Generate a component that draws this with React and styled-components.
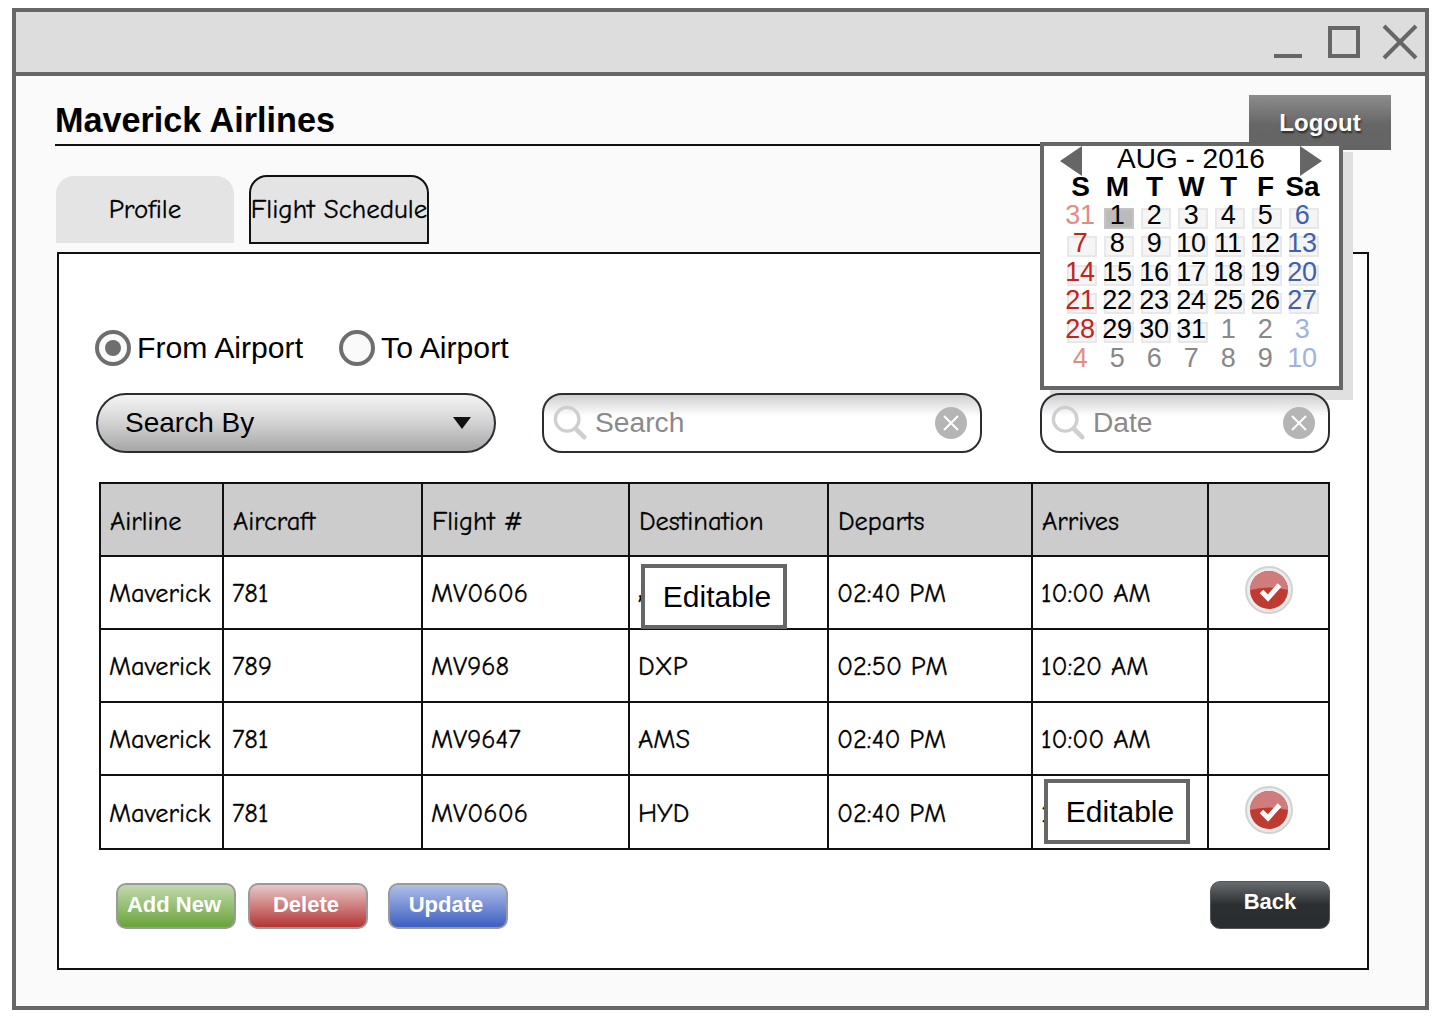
import styled, { createGlobalStyle } from "styled-components";

const sketch = `"Comic Sans MS", "Comic Neue", cursive`;

const GlobalStyle = createGlobalStyle`
  html, body {
    margin: 0;
    padding: 0;
    background: #fff;
  }
  * {
    box-sizing: border-box;
  }
`;

const Page = styled.div`
  padding: 8px 0 0 12px;
  font-family: "Liberation Sans", Arial, sans-serif;
  color: #000;
`;

const Window = styled.div`
  position: relative;
  width: 1417px;
  height: 1002px;
  border: 4px solid #666;
  background: #fafafa;
`;

const TitleBar = styled.div`
  height: 64px;
  background: #ddd;
  border-bottom: 4px solid #666;
  display: flex;
  justify-content: flex-end;
  align-items: flex-start;
  padding: 12px 7px 0 0;
  gap: 22px;
`;

const Body = styled.div`
  padding: 19px 56px 0 39px;
`;

const Header = styled.div`
  display: flex;
  align-items: flex-start;
  width: 1336px;
`;

const Title = styled.h1`
  flex: 1;
  margin: 0 22px 0 0;
  height: 51px;
  line-height: 50px;
  font-size: 34.2px;
  font-weight: bold;
  border-bottom: 2px solid #111;
`;

const Logout = styled.button`
  width: 142px;
  height: 55px;
  border: 0;
  padding: 0;
  background: linear-gradient(#8c8c8c, #666 55%, #646464);
  color: #fff;
  font-family: inherit;
  font-size: 24px;
  font-weight: bold;
  text-shadow: 1px 2px 2px rgba(0, 0, 0, 0.6);
`;

const Tabs = styled.div`
  display: flex;
  align-items: flex-end;
  gap: 15px;
  margin: 25px 0 8px 1px;
`;

const Tab = styled.div`
  width: ${(p) => (p.$active ? "180px" : "178px")};
  height: ${(p) => (p.$active ? "69px" : "67px")};
  margin-bottom: ${(p) => (p.$active ? "0" : "1px")};
  padding-bottom: ${(p) => (p.$active ? "0" : "1px")};
  border-radius: 18px 18px 0 0;
  border: ${(p) => (p.$active ? "2px solid #111" : "0")};
  background: #e4e4e4;
  display: flex;
  align-items: center;
  justify-content: center;
  font-family: ${sketch};
  font-size: 27px;
  -webkit-text-stroke: 0.3px #000;
  white-space: nowrap;
`;

const Panel = styled.div`
  margin-left: 2px;
  width: 1312px;
  height: 718px;
  border: 2px solid #111;
  background: #fff;
  padding: 76px 0 0 37px;
`;

const RadioRow = styled.div`
  display: flex;
  align-items: center;
  gap: 36px;
  height: 36px;
  margin-left: -1px;
`;

const RadioLabel = styled.label`
  display: flex;
  align-items: center;
  gap: 6px;
  font-size: 30.2px;
`;

const RadioDot = styled.span`
  width: 36px;
  height: 36px;
  border-radius: 50%;
  border: 4px solid #6e6e6e;
  background: #fafafa;
  display: flex;
  align-items: center;
  justify-content: center;

  &::after {
    content: "";
    width: 16px;
    height: 16px;
    border-radius: 50%;
    background: ${(p) => (p.$checked ? "#6e6e6e" : "transparent")};
  }
`;

const FilterRow = styled.div`
  display: flex;
  margin-top: 27px;
  height: 60px;
`;

const Select = styled.div`
  width: 400px;
  margin-right: 46px;
  border: 2px solid #2a2e33;
  border-radius: 30px;
  background: linear-gradient(#f4f4f4, #d6d6d6 45%, #a6a6a6);
  display: flex;
  align-items: center;
  justify-content: space-between;
  padding: 0 23px 0 27px;
  font-size: 28px;
`;

const SearchBox = styled.div`
  position: relative;
  z-index: 2;
  width: ${(p) => p.$width}px;
  margin-right: ${(p) => p.$gap}px;
  border: 2px solid #2a2e33;
  border-radius: 20px;
  background: linear-gradient(#cfcfcf, #fff 38%);
  display: flex;
  align-items: center;
  padding: 0 13px 0 9px;
  gap: 8px;
  font-size: 28.2px;
  color: #8a8a8a;
`;

const SearchText = styled.span`
  flex: 1;
  margin-top: -2px;
`;

const DataTable = styled.table`
  margin: 29px 0 0 3px;
  width: 1229px;
  table-layout: fixed;
  border-collapse: collapse;
  font-family: ${sketch};
  font-size: 26.4px;
  -webkit-text-stroke: 0.3px #000;

  tbody tr:last-child td {
    height: 74px;
  }
`;

const HeadCell = styled.th`
  background: #ccc;
  border: 2px solid #111;
  padding: 3px 0 0 9px;
  height: 73px;
  text-align: left;
  font-weight: normal;
`;

const Cell = styled.td`
  position: relative;
  border: 2px solid #111;
  padding: 2px 0 0 8px;
  height: 73px;
  white-space: nowrap;
`;

const IconCell = styled(Cell)`
  padding: 0 0 5px;
  text-align: center;
  line-height: 0;
`;

const Editable = styled.div`
  position: absolute;
  left: 11px;
  top: ${(p) => p.$top}px;
  width: 146px;
  height: 65px;
  border: 4px solid #666;
  background: #fff;
  display: flex;
  align-items: center;
  justify-content: center;
  padding-left: 6px;
  font-family: "Liberation Sans", Arial, sans-serif;
  font-size: 30px;
  -webkit-text-stroke: 0;
`;

const Footer = styled.div`
  display: flex;
  align-items: flex-end;
  margin-top: 31px;
  padding-left: 20px;
  width: 1234px;
  height: 48px;
`;

const colors = {
  green: "#c3dab0, #69a43a",
  red: "#e6c8c8, #b43634",
  blue: "#b0bfe9, #3d5fc1",
};

const ActionButton = styled.button`
  width: 120px;
  height: 46px;
  margin-right: ${(p) => p.$gap}px;
  border: 2px solid #9a9a9a;
  border-radius: 10px;
  padding: 0 4px 3px 0;
  background: linear-gradient(${(p) => colors[p.$color]});
  color: #fff;
  font-family: inherit;
  font-size: 22px;
  font-weight: bold;
`;

const BackButton = styled.button`
  margin-left: auto;
  width: 120px;
  height: 48px;
  border: 1px solid #555;
  border-radius: 10px;
  padding: 0 0 6px;
  background: linear-gradient(#686c6e, #2c2f31 50%, #2b2e30);
  color: #fff;
  font-family: inherit;
  font-size: 22px;
  font-weight: bold;
`;

const Calendar = styled.div`
  position: absolute;
  z-index: 1;
  left: 1024px;
  top: 130px;
  width: 303px;
  height: 248px;
  border: 4px solid #666;
  background: #fff;
  box-shadow: 10px 10px 0 #e0e0e0;
  padding: 0 0 0 18px;
`;

const MonthRow = styled.div`
  display: flex;
  align-items: flex-start;
  justify-content: space-between;
  height: 26px;
  margin: 0 0 0 -2px;
  padding-right: 17px;
  font-size: 28px;
  line-height: 26px;
`;

const DayGrid = styled.div`
  display: grid;
  grid-template-columns: repeat(7, 37px);
  grid-auto-rows: 28.6px;
`;

const DayName = styled.div`
  font-size: 28px;
  font-weight: bold;
  line-height: 30px;
  text-align: center;
`;

const tones = {
  sun: "#c0241c",
  sunFaded: "#e08d88",
  sat: "#3f5fb0",
  satFaded: "#a0b2e0",
  faded: "#888",
  plain: "#000",
};

const DateCell = styled.div`
  position: relative;
  isolation: isolate;
  font-size: 27px;
  line-height: 28.6px;
  text-align: center;
  text-indent: -1px;
  letter-spacing: -0.3px;
  color: ${(p) => tones[p.$tone]};

  &::before {
    content: "";
    display: ${(p) => (p.$chip ? "block" : "none")};
    position: absolute;
    z-index: -1;
    left: 5px;
    top: 7px;
    width: 26px;
    height: 17px;
    border: 2px solid ${(p) => (p.$selected ? "#c4c4c4" : "#e8e8e8")};
    background: ${(p) => (p.$selected ? "#bbb" : "#f5f5f5")};
  }
`;

function SearchIcon() {
  return (
    <svg width="34" height="36" viewBox="0 0 36 38" fill="none" stroke="#cfcfcf">
      <circle cx="15" cy="15" r="12.5" strokeWidth="3.5" />
      <path d="M24 25 L33 34" strokeWidth="5" strokeLinecap="round" />
    </svg>
  );
}

function ClearIcon() {
  return (
    <svg width="32" height="32" viewBox="0 0 32 32">
      <circle cx="16" cy="16" r="16" fill="#b5b5b5" />
      <path d="M9 9 L23 23 M23 9 L9 23" stroke="#fff" strokeWidth="2" />
    </svg>
  );
}

function CheckIcon() {
  return (
    <svg width="48" height="48" viewBox="0 0 48 48">
      <circle cx="24" cy="24" r="23" fill="#ececec" stroke="#d2d2d2" strokeWidth="2" />
      <circle cx="24" cy="24" r="19" fill="#bf3a30" />
      <path d="M5 24 A19 19 0 0 1 43 24 Q24 19 5 24 Z" fill="#d07c7c" />
      <path d="M16.5 25.5 L23 32 L34.5 19" fill="none" stroke="#fff" strokeWidth="5" />
    </svg>
  );
}

const dates = [
  [31, "sunFaded"], [1, "plain"], [2, "plain"], [3, "plain"], [4, "plain"], [5, "plain"], [6, "sat"],
  [7, "sun"], [8, "plain"], [9, "plain"], [10, "plain"], [11, "plain"], [12, "plain"], [13, "sat"],
  [14, "sun"], [15, "plain"], [16, "plain"], [17, "plain"], [18, "plain"], [19, "plain"], [20, "sat"],
  [21, "sun"], [22, "plain"], [23, "plain"], [24, "plain"], [25, "plain"], [26, "plain"], [27, "sat"],
  [28, "sun"], [29, "plain"], [30, "plain"], [31, "plain"], [1, "faded"], [2, "faded"], [3, "satFaded"],
  [4, "sunFaded"], [5, "faded"], [6, "faded"], [7, "faded"], [8, "faded"], [9, "faded"], [10, "satFaded"],
];

const columns = [123, 199, 207, 199, 204, 176, 121];
const headings = ["Airline", "Aircraft", "Flight #", "Destination", "Departs", "Arrives", ""];

const rows = [
  { id: 1, cells: ["Maverick", "781", "MV0606", "AMS", "02:40 PM", "10:00 AM"], editAt: 3, editTop: 7, checked: true },
  { id: 2, cells: ["Maverick", "789", "MV968", "DXP", "02:50 PM", "10:20 AM"] },
  { id: 3, cells: ["Maverick", "781", "MV9647", "AMS", "02:40 PM", "10:00 AM"] },
  { id: 4, cells: ["Maverick", "781", "MV0606", "HYD", "02:40 PM", "10:00 AM"], editAt: 5, editTop: 3, checked: true },
];

function App() {
  return (
    <Page>
      <GlobalStyle />
      <Window>
        <TitleBar>
          <svg width="36" height="36" viewBox="0 0 36 36">
            <rect x="4" y="30" width="28" height="4" fill="#666" />
          </svg>
          <svg width="32" height="34" viewBox="0 0 32 34">
            <rect x="2" y="4" width="28" height="28" fill="none" stroke="#666" strokeWidth="4" />
          </svg>
          <svg width="36" height="36" viewBox="0 0 36 36">
            <path d="M2 2 L34 34 M34 2 L2 34" stroke="#666" strokeWidth="4" />
          </svg>
        </TitleBar>

        <Body>
          <Header>
            <Title>Maverick Airlines</Title>
            <Logout>Logout</Logout>
          </Header>

          <Tabs>
            <Tab>Profile</Tab>
            <Tab $active>Flight Schedule</Tab>
          </Tabs>

          <Panel>
            <RadioRow>
              <RadioLabel>
                <RadioDot $checked />
                From Airport
              </RadioLabel>
              <RadioLabel>
                <RadioDot />
                To Airport
              </RadioLabel>
            </RadioRow>

            <FilterRow>
              <Select>
                Search By
                <svg width="18" height="12" viewBox="0 0 18 12">
                  <path d="M0 0 H18 L9 12 Z" fill="#111" />
                </svg>
              </Select>
              <SearchBox $width={440} $gap={58}>
                <SearchIcon />
                <SearchText>Search</SearchText>
                <ClearIcon />
              </SearchBox>
              <SearchBox $width={290} $gap={0}>
                <SearchIcon />
                <SearchText>Date</SearchText>
                <ClearIcon />
              </SearchBox>
            </FilterRow>

            <DataTable>
              <colgroup>
                {columns.map((width, i) => (
                  <col key={i} width={width} />
                ))}
              </colgroup>
              <thead>
                <tr>
                  {headings.map((text, i) => (
                    <HeadCell key={i}>{text}</HeadCell>
                  ))}
                </tr>
              </thead>
              <tbody>
                {rows.map((row) => (
                  <tr key={row.id}>
                    {row.cells.map((text, i) => (
                      <Cell key={i}>
                        {text}
                        {row.editAt === i && <Editable $top={row.editTop}>Editable</Editable>}
                      </Cell>
                    ))}
                    <IconCell>{row.checked && <CheckIcon />}</IconCell>
                  </tr>
                ))}
              </tbody>
            </DataTable>

            <Footer>
              <ActionButton $color="green" $gap={12}>Add New</ActionButton>
              <ActionButton $color="red" $gap={20}>Delete</ActionButton>
              <ActionButton $color="blue" $gap={0}>Update</ActionButton>
              <BackButton>Back</BackButton>
            </Footer>
          </Panel>
        </Body>

        <Calendar>
          <MonthRow>
            <svg width="22" height="30" viewBox="0 0 22 30">
              <path d="M22 0 V30 L0 15 Z" fill="#666" />
            </svg>
            AUG - 2016
            <svg width="22" height="30" viewBox="0 0 22 30">
              <path d="M0 0 V30 L22 15 Z" fill="#666" />
            </svg>
          </MonthRow>
          <DayGrid>
            {["S", "M", "T", "W", "T", "F", "Sa"].map((day, i) => (
              <DayName key={i}>{day}</DayName>
            ))}
            {dates.map(([day, tone], i) => (
              <DateCell
                key={i}
                $tone={tone}
                $chip={tone !== "faded" && tone !== "satFaded" && tone !== "sunFaded"}
                $selected={i === 1}
              >
                {day}
              </DateCell>
            ))}
          </DayGrid>
        </Calendar>
      </Window>
    </Page>
  );
}

export default App;
